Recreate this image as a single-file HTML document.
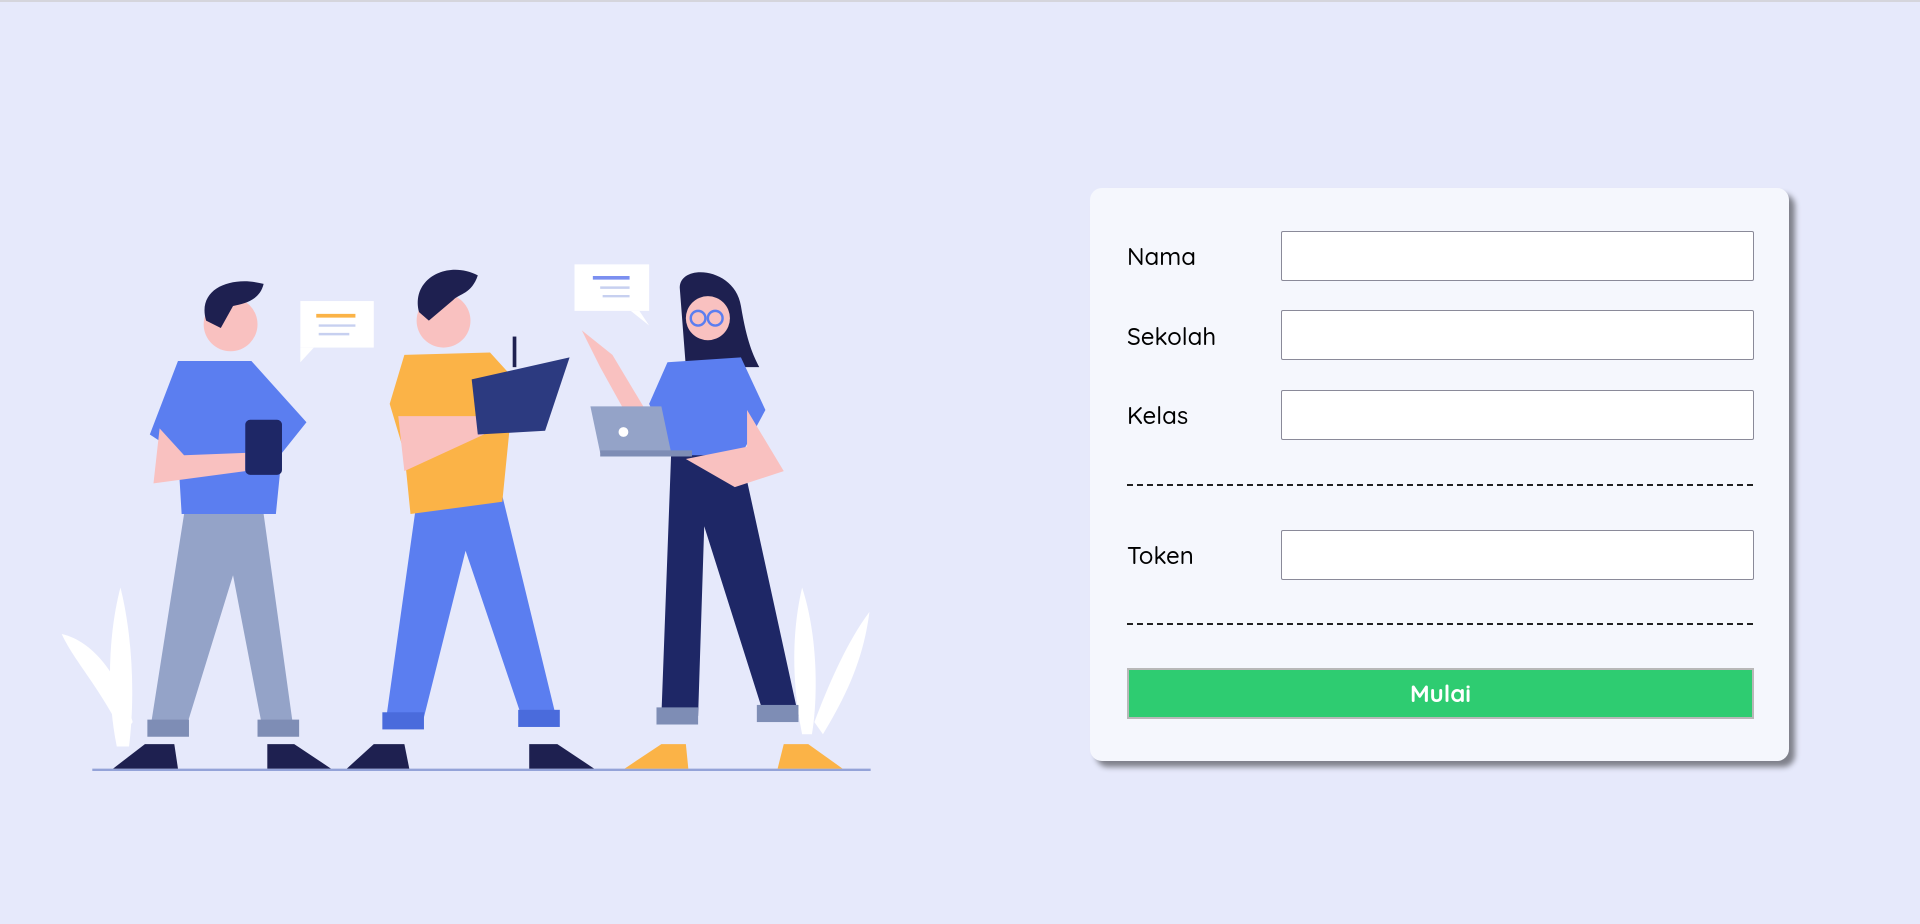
<!DOCTYPE html>
<html><head><meta charset="utf-8"><style>
html,body{margin:0;padding:0;width:1920px;height:924px;overflow:hidden;background:#e6e9fb;font-family:"Quicksand","Liberation Sans",sans-serif;}
.top{position:absolute;left:0;top:0;width:1920px;height:2px;background:#d5d5dc}
svg.ill{position:absolute;left:0;top:0}
.card{position:absolute;left:1090px;top:188px;width:699px;height:573px;background:#f5f7fd;border-radius:12px;box-shadow:6px 6px 6px rgba(0,0,0,.45)}
.lbl{position:absolute;left:1127px;font-size:24px;color:#000;font-weight:500}
.inp{position:absolute;left:1281px;width:471px;height:48px;background:#fff;border:1px solid #8a8a99;border-radius:2px}
.dash{position:absolute;left:1127px;width:626px;border-top:2px dashed #222}
.btn{position:absolute;left:1127px;top:668px;width:623px;height:47px;background:#2ecc71;border:2px solid #b8b8b8;color:#fff;font-weight:bold;font-size:24px;text-align:center;line-height:47px}
</style></head><body>
<div class="top"></div>
<svg class="ill" width="1920" height="924" viewBox="0 0 1568 755">
<path d="M95 610 C85 560 90 510 98 480 C108 520 110 570 105 610Z" fill="#fff"/>
<path d="M100 600 C80 560 60 540 50 518 C80 525 100 560 108 590Z" fill="#fff"/>
<path d="M655 600 C645 550 648 510 655 480 C668 520 668 570 663 600Z" fill="#fff"/>
<path d="M665 590 C680 550 695 520 710 500 C705 540 690 570 672 600Z" fill="#fff"/>
<line x1="75" y1="629" x2="711" y2="629" stroke="#94a3d8" stroke-width="2"/>
<path d="M150 420 L215 420 L240 600 L215 600 L190 470 L150 600 L122 598Z" fill="#94a3c8"/>
<rect x="120" y="588" width="34" height="14" fill="#7e8db5"/><rect x="210" y="588" width="34" height="14" fill="#7e8db5"/>
<path d="M92 628 L145 628 L142 608 L118 608Z" fill="#1e2050"/><path d="M218 608 L240 608 L270 628 L218 628Z" fill="#1e2050"/>
<path d="M145 295 L205 295 L250 345 L230 370 L225 420 L148 420 L145 370 L122 355Z" fill="#5b7ef0"/>
<path d="M130 350 L125 395 L200 385 L200 370 L150 372Z" fill="#f9c1c0"/>
<rect x="200" y="343" width="30" height="45" rx="4" fill="#1e2766"/>
<circle cx="188" cy="265" r="22" fill="#f9c1c0"/>
<path d="M168 262 C160 235 190 225 215 232 C212 245 200 248 190 250 L180 268Z" fill="#1e2050"/>
<rect x="245" y="246" width="60" height="38" fill="#fff"/><path d="M245 284 L245 296 L256 284Z" fill="#fff"/>
<line x1="258" y1="258" x2="290" y2="258" stroke="#fbb347" stroke-width="3"/><line x1="260" y1="266" x2="290" y2="266" stroke="#c7d0f0" stroke-width="2"/><line x1="260" y1="273" x2="285" y2="273" stroke="#c7d0f0" stroke-width="2"/>
<path d="M340 410 L410 405 L455 590 L428 592 L380 450 L345 590 L315 588Z" fill="#5b7ef0"/>
<rect x="312" y="582" width="34" height="14" fill="#4a6bdc"/><rect x="423" y="580" width="34" height="14" fill="#4a6bdc"/>
<path d="M283 628 L334 628 L330 608 L305 608Z" fill="#1e2050"/><path d="M432 608 L455 608 L485 628 L432 628Z" fill="#1e2050"/>
<path d="M330 290 L400 288 L420 310 L410 410 L335 420 L330 370 L318 330Z" fill="#fbb347"/>
<path d="M325 340 L330 385 L395 355 L390 340Z" fill="#f9c1c0"/>
<path d="M385 310 L465 292 L445 352 L390 355Z" fill="#2c3a80"/>
<line x1="420" y1="275" x2="420" y2="300" stroke="#1e2050" stroke-width="3"/>
<circle cx="362" cy="262" r="22" fill="#f9c1c0"/>
<path d="M342 255 C335 228 365 212 390 225 C385 240 375 240 370 245 L350 262Z" fill="#1e2050"/>
<rect x="469" y="216" width="61" height="38" fill="#fff"/><path d="M515 254 L530 266 L522 254Z" fill="#fff"/>
<line x1="484" y1="227" x2="514" y2="227" stroke="#7b8ff0" stroke-width="3"/><line x1="490" y1="235" x2="514" y2="235" stroke="#c7d0f0" stroke-width="2"/><line x1="492" y1="242" x2="514" y2="242" stroke="#c7d0f0" stroke-width="2"/>
<path d="M548 370 L605 370 L652 585 L625 588 L575 430 L570 585 L540 585Z" fill="#1e2766"/>
<rect x="536" y="578" width="34" height="14" fill="#7e8db5"/><rect x="618" y="576" width="34" height="14" fill="#7e8db5"/>
<path d="M510 628 L562 628 L560 608 L540 608Z" fill="#fbb347"/><path d="M640 608 L660 608 L688 628 L635 628Z" fill="#fbb347"/>
<path d="M555 235 C555 215 600 218 605 250 C610 280 615 290 620 300 L560 300Z" fill="#1e2050"/>
<path d="M545 296 L605 292 L625 335 L605 372 L548 372 L530 330Z" fill="#5b7ef0"/>
<path d="M475 270 L490 300 L515 345 L530 340 L500 290Z" fill="#f9c1c0"/>
<path d="M610 335 L640 385 L600 398 L560 375 L610 365Z" fill="#f9c1c0"/>
<path d="M482 332 L540 332 L548 370 L490 370Z" fill="#94a3c8"/><rect x="490" y="368" width="75" height="5" fill="#7e8db5"/>
<circle cx="509" cy="353" r="4" fill="#fff"/>
<circle cx="578" cy="260" r="18" fill="#f9c1c0"/>
<circle cx="570" cy="260" r="6" fill="none" stroke="#5b7ef0" stroke-width="2"/><circle cx="584" cy="260" r="6" fill="none" stroke="#5b7ef0" stroke-width="2"/>
</svg>
<div class="card"></div>
<div class="lbl" style="top:241px">Nama</div><div class="inp" style="top:231px"></div>
<div class="lbl" style="top:321px">Sekolah</div><div class="inp" style="top:310px"></div>
<div class="lbl" style="top:400px">Kelas</div><div class="inp" style="top:390px"></div>
<div class="dash" style="top:484px"></div>
<div class="lbl" style="top:540px">Token</div><div class="inp" style="top:530px"></div>
<div class="dash" style="top:623px"></div>
<div class="btn">Mulai</div>
</body></html>
